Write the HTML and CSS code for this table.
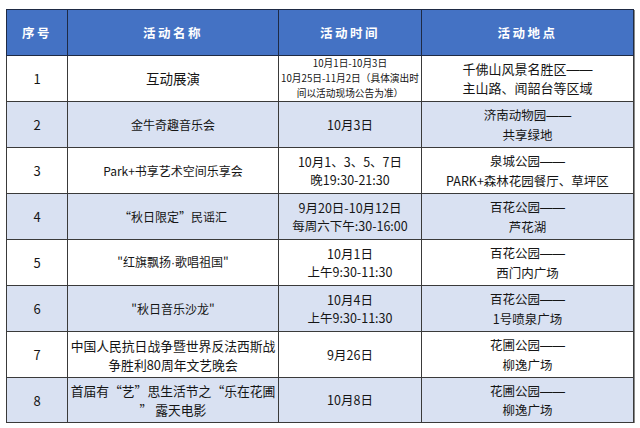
FILE: index.html
```html
<!DOCTYPE html>
<html lang="zh-CN">
<head>
<meta charset="utf-8">
<title>活动安排</title>
<link rel="stylesheet" href="styles.css">
</head>
<body>
<div class="page">
<table class="sched">
<colgroup>
<col class="c-no"><col class="c-name"><col class="c-time"><col class="c-place">
</colgroup>
<thead>
<tr class="head"><th>序号</th><th>活动名称</th><th>活动时间</th><th>活动地点</th></tr>
</thead>
<tbody>
<tr class="r1">
<td class="no">1</td>
<td class="name big">互动展演</td>
<td class="time tiny">10月1日-10月3日<br>10月25日-11月2日（具体演出时<br>间以活动现场公告为准）</td>
<td class="place big">千佛山风景名胜区<span class="dash">——</span><br>主山路、闻韶台等区域</td>
</tr>
<tr class="alt">
<td class="no">2</td>
<td class="name">金牛奇趣音乐会</td>
<td class="time">10月3日</td>
<td class="place">济南动物园<span class="dash">——</span><br>共享绿地</td>
</tr>
<tr>
<td class="no">3</td>
<td class="name">Park+书享艺术空间乐享会</td>
<td class="time">10月1、3、5、7日<br>晚19:30-21:30</td>
<td class="place">泉城公园<span class="dash">——</span><br>PARK+森林花园餐厅、草坪区</td>
</tr>
<tr class="alt">
<td class="no">4</td>
<td class="name">“秋日限定”民谣汇</td>
<td class="time">9月20日-10月12日<br>每周六下午:30-16:00</td>
<td class="place">百花公园<span class="dash">——</span><br>芦花湖</td>
</tr>
<tr>
<td class="no">5</td>
<td class="name">"红旗飘扬<span class="dot">·</span>歌唱祖国"</td>
<td class="time">10月1日<br>上午9:30-11:30</td>
<td class="place">百花公园<span class="dash">——</span><br>西门内广场</td>
</tr>
<tr class="alt">
<td class="no">6</td>
<td class="name">"秋日音乐沙龙"</td>
<td class="time">10月4日<br>上午9:30-11:30</td>
<td class="place">百花公园<span class="dash">——</span><br>1号喷泉广场</td>
</tr>
<tr>
<td class="no">7</td>
<td class="name wide">中国人民抗日战争暨世界反法西斯战<br>争胜利80周年文艺晚会</td>
<td class="time">9月26日</td>
<td class="place">花圃公园<span class="dash">——</span><br>柳逸广场</td>
</tr>
<tr class="alt last">
<td class="no">8</td>
<td class="name wide">首届有“艺”思生活节之“乐在花圃<br>” 露天电影</td>
<td class="time">10月8日</td>
<td class="place">花圃公园<span class="dash">——</span><br>柳逸广场</td>
</tr>
</tbody>
</table>
</div>
</body>
</html>
```
FILE: styles.css
```css
html, body {
  margin: 0;
  padding: 0;
  background: #ffffff;
}

.page {
  padding: 9px 0 0 6px;
  font-family: "Noto Sans CJK SC", "Noto Sans", "Liberation Sans", sans-serif;
  color: #151515;
}

.sched {
  width: 627px;
  border-collapse: collapse;
  table-layout: fixed;
  box-shadow: 1px 1px 0 #8a8a8a;
}

.c-no { width: 61px; }
.c-name { width: 211px; }
.c-time { width: 143px; }
.c-place { width: 212px; }

.sched th,
.sched td {
  border: 1px solid #3a3a3a;
  padding: 0 1px;
  text-align: center;
  vertical-align: middle;
}

.head {
  height: 46px;
  background: #4472c4;
}

.head th {
  color: #ffffff;
  font-size: 12.5px;
  font-weight: 700;
  letter-spacing: 2.5px;
  border-color: #1e2a44;
}

.sched tbody tr {
  height: 46px;
}

.sched tbody tr.r1,
.sched tbody tr.last {
  height: 45px;
}

.alt {
  background: #d9e1f2;
}

.no {
  font-size: 13px;
}

.name {
  font-size: 12px;
  line-height: 17px;
}

.name.big {
  font-size: 13.5px;
}

.name.wide {
  font-size: 12.8px;
  line-height: 19px;
}

.time {
  font-size: 12.5px;
  line-height: 18px;
}

.time.tiny {
  font-size: 9.7px;
  line-height: 15px;
}

.place {
  font-size: 12.5px;
  line-height: 17.5px;
}

.place.big {
  font-size: 13px;
  line-height: 18px;
}

.dash {
  font-family: "Liberation Sans", sans-serif;
}

.dot {
  font-family: "Liberation Sans", sans-serif;
}
```
